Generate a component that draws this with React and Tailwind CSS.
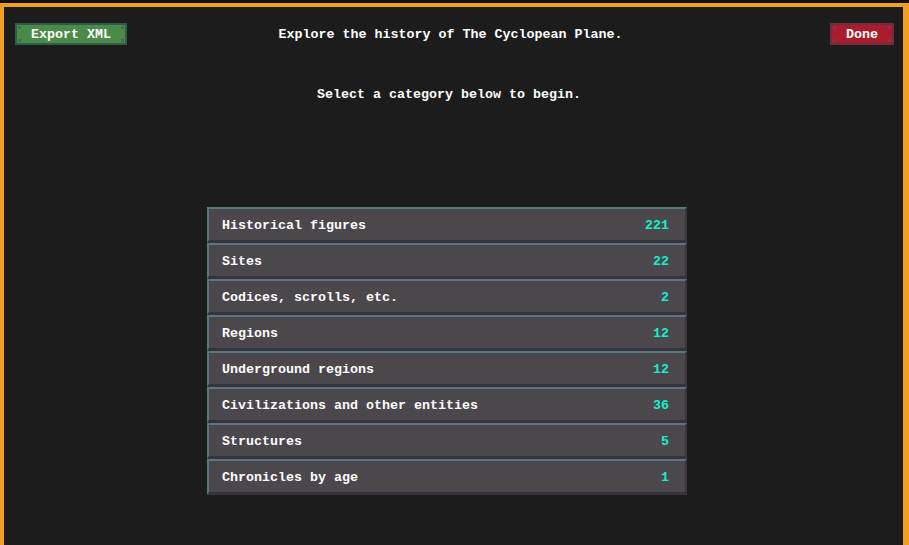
import React from 'react';

const categories = [
  { name: 'Historical figures', count: 221 },
  { name: 'Sites', count: 22 },
  { name: 'Codices, scrolls, etc.', count: 2 },
  { name: 'Regions', count: 12 },
  { name: 'Underground regions', count: 12 },
  { name: 'Civilizations and other entities', count: 36 },
  { name: 'Structures', count: 5 },
  { name: 'Chronicles by age', count: 1 },
];

const font = { fontFamily: '"Liberation Mono", "DejaVu Sans Mono", monospace' };

const Rivets = ({ color }) => (
  <>
    <span className={`absolute left-[1px] top-[1px] w-[3px] h-[3px] ${color}`} />
    <span className={`absolute right-[1px] top-[1px] w-[3px] h-[3px] ${color}`} />
    <span className={`absolute left-[1px] bottom-[1px] w-[3px] h-[3px] ${color}`} />
    <span className={`absolute right-[1px] bottom-[1px] w-[3px] h-[3px] ${color}`} />
  </>
);

const App = () => {
  return (
    <div
      className="w-[909px] h-[545px] bg-[#111] pt-[3px] overflow-hidden text-white font-bold text-[13.33px]"
      style={font}
    >
      {/* orange frame */}
      <div className="h-full border-t-4 border-l-4 border-r-[6px] border-[#f0a020] bg-[#1c1c1c]">
        <div className="h-full pt-[16px]">
          {/* Header */}
          <div className="grid grid-cols-[1fr_auto_1fr] items-center h-[22px] pl-[11px] pr-[9px]">
            <button className="relative justify-self-start w-[112px] h-[22px] pt-[2px] bg-[#4b8a48] border-2 border-[#2f5c45] text-white leading-none">
              <Rivets color="bg-[#3e6e4e]" />
              Export XML
            </button>
            <span className="mr-[8px] pt-[2px] leading-none">Explore the history of The Cyclopean Plane.</span>
            <button className="relative justify-self-end w-[64px] h-[22px] pt-[2px] bg-[#a81c2c] border-2 border-[#6e2c3c] text-white leading-none">
              <Rivets color="bg-[#8a3446]" />
              Done
            </button>
          </div>

          <p className="mt-[42px] text-center leading-[16px] pr-[9px]">Select a category below to begin.</p>

          {/* Category list */}
          <div className="mt-[104px] ml-[203px] w-[480px] flex flex-col">
            {categories.map(c => (
              <div
                key={c.name}
                className="h-[36px] flex items-center justify-between pl-[13px] pr-[16px] bg-[#4c464d] border-t-2 border-t-[#587784] border-l-2 border-l-[#587784] border-b-[3px] border-b-[#37333a] border-r-2 border-r-[#3a353c]"
              >
                <span className="pt-[3px]">{c.name}</span>
                <span className="pt-[3px] text-[#12f0cc]">{c.count}</span>
              </div>
            ))}
          </div>
        </div>
      </div>
    </div>
  );
};

export default App;
